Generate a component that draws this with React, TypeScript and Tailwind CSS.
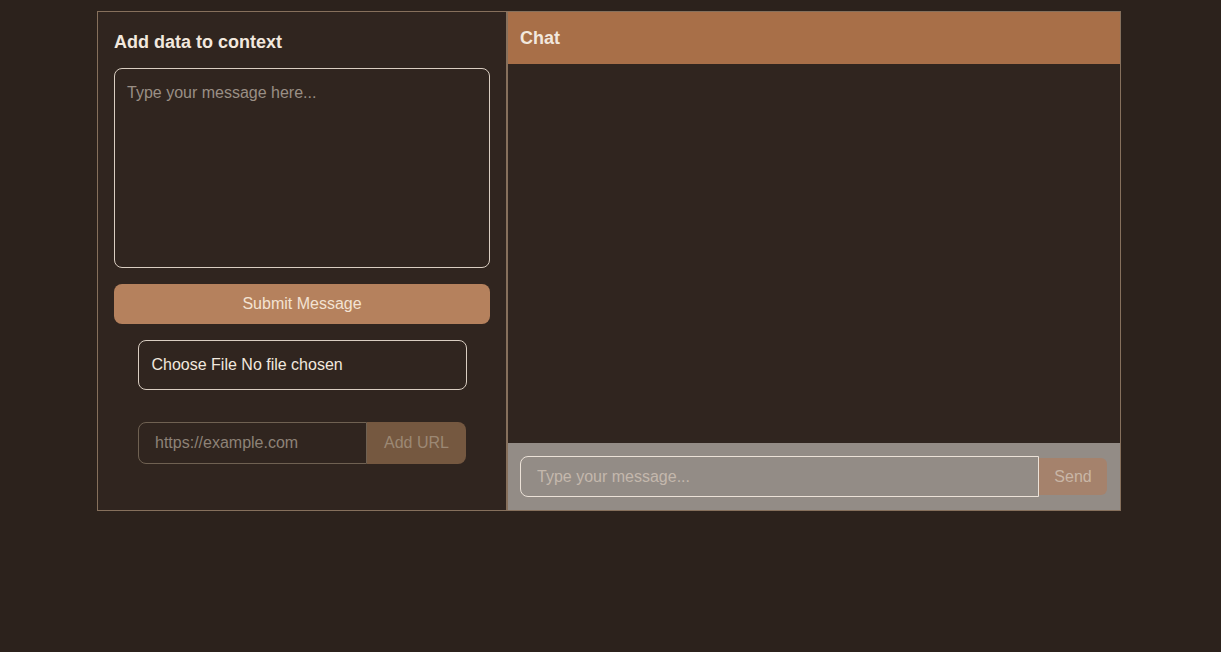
export default function App() {
  return (
    <div className="min-h-screen w-full bg-[#2c221c] pt-[11px] font-['Liberation_Sans',Arial,sans-serif]">
      <div className="ml-[97px] flex h-[500px] w-[1024px]">
        {/* Left: context panel */}
        <div className="flex w-[410px] flex-col border border-[#86705c] bg-[#30251f] p-4">
          <h2 className="mb-3 text-lg leading-7 font-bold text-[#f2e8de]">Add data to context</h2>
          <textarea
            className="h-[200px] w-full resize-none rounded-lg border border-[#d9cdc1] bg-transparent px-3 py-3 text-base text-[#e8ddd2] outline-none placeholder:text-[#9a8f85]"
            placeholder="Type your message here..."
          />
          <button className="mt-4 h-10 w-full rounded-lg bg-[#b5815d] text-base text-[#f3e3d3]">
            Submit Message
          </button>
          <div className="mx-auto mt-4 flex h-[50px] w-[329px] items-center rounded-lg border border-[#d9cdc1] px-[13px] text-base text-[#f2e8de]">
            Choose File No file chosen
          </div>
          <div className="mx-auto mt-8 flex h-[42px] w-[328px]">
            <input
              className="h-full w-[229px] rounded-l-lg border border-[#6f6152] bg-transparent px-4 text-base text-[#e8ddd2] outline-none placeholder:text-[#8d8277]"
              placeholder="https://example.com"
            />
            <button className="h-full flex-1 rounded-r-lg bg-[#755840] text-base text-[#9c8874]">Add URL</button>
          </div>
        </div>

        {/* Right: chat panel */}
        <div className="flex flex-1 flex-col border border-[#86705c] bg-[#30251f]">
          <div className="flex h-[52px] items-center bg-[#a86f48] px-3">
            <h2 className="text-lg font-bold text-[#f2e8de]">Chat</h2>
          </div>
          <div className="flex-1" />
          <div className="flex h-[67px] items-center bg-[#938c86] pr-[13px] pl-3">
            <input
              className="h-[41px] flex-1 rounded-l-lg border border-[#ece2d8] bg-transparent px-4 text-base text-[#f2e8de] outline-none placeholder:text-[#c4b8ad]"
              placeholder="Type your message..."
            />
            <button className="h-[37px] w-[68px] rounded-r-md bg-[#a5826c] text-base text-[#c9b6a6]">Send</button>
          </div>
        </div>
      </div>
    </div>
  );
}
